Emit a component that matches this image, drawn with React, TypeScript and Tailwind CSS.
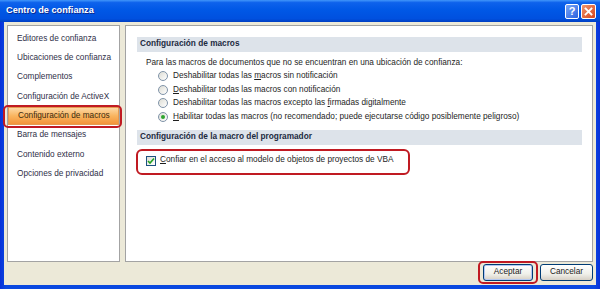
import React from "react";

const leftItems = [
  "Editores de confianza",
  "Ubicaciones de confianza",
  "Complementos",
  "Configuración de ActiveX",
  "Configuración de macros",
  "Barra de mensajes",
  "Contenido externo",
  "Opciones de privacidad",
];

function Radio({ checked }: { checked?: boolean }) {
  return (
    <span className="w-[10px] h-[10px] rounded-full border border-[#7f93a8] bg-[linear-gradient(135deg,#dcdcd4,#ffffff)] flex items-center justify-center shrink-0">
      {checked && <span className="w-[4px] h-[4px] rounded-full bg-[#2fa52f]" />}
    </span>
  );
}

export default function App() {
  return (
    <div className="w-[600px] h-[289px] flex flex-col overflow-hidden bg-[linear-gradient(to_right,#0831d9,#0a48e0_1%,#0a48e0_99%,#0831d9)] font-['Liberation_Sans',Arial,sans-serif]">
      {/* Title bar */}
      <div className="h-[22px] shrink-0 flex items-center pl-[6px] pr-[4px] bg-[linear-gradient(to_bottom,#4196fa_0%,#0e62ec_12%,#0058e6_45%,#0050df_85%,#003ec2_100%)]">
        <span className="text-white font-bold text-[9.2px] [text-shadow:1px_1px_0_#0b2a8f]">Centro de confianza</span>
        <div className="ml-auto flex gap-[2px] mt-[1px]">
          <div className="w-[14px] h-[15px] rounded-[2px] border border-white bg-[linear-gradient(135deg,#7aa6f6,#2a62e0)] flex items-center justify-center">
            <span className="text-white font-bold text-[11px] leading-none">?</span>
          </div>
          <div className="w-[15px] h-[15px] rounded-[2px] border border-white bg-[linear-gradient(135deg,#f0956e,#d6461c)] flex items-center justify-center">
            <svg width="9" height="9" viewBox="0 0 9 9">
              <path d="M1.5 1.5 L7.5 7.5 M7.5 1.5 L1.5 7.5" stroke="white" strokeWidth="1.8" strokeLinecap="square" />
            </svg>
          </div>
        </div>
      </div>

      {/* Body */}
      <div className="flex-1 mx-[4px] mb-[4px] bg-[#ece9d8] flex flex-col px-[3px] pt-[3px] text-[8.25px] text-[#1e1e1e]">
        <div className="flex gap-[5px] h-[237px] shrink-0">
          {/* Left panel */}
          <div className="w-[113px] shrink-0 bg-white border border-[#a3a3a3] pt-[3px]">
            {leftItems.map((t, i) =>
              i === 4 ? (
                <div key={t} className="relative h-[19.4px] flex items-center">
                  <div className="h-[18px] w-full flex items-center pl-[9px] bg-[linear-gradient(to_bottom,#fdd8a4,#f9b45e_50%,#f3943a)] border border-[#e59a50] text-[#3a2a10]">
                    {t}
                  </div>
                  <div className="absolute left-[-5px] top-[-2px] w-[119px] h-[23px] rounded-[5px] border-2 border-[#c01a22]" />
                </div>
              ) : (
                <div key={t} className="h-[19.4px] flex items-center pl-[9px] text-[#2f2f48]">
                  {t}
                </div>
              )
            )}
          </div>

          {/* Right panel */}
          <div className="flex-1 bg-white border border-[#a3a3a3] pt-[11px] pl-[11px] pr-[10px]">
            <div className="h-[15px] bg-[#dde3ea] flex items-center pl-[3px] font-bold text-[#1c2a40]">
              Configuración de macros
            </div>
            <div className="pl-[9px]">
              <div className="h-[12px] mt-[5.5px] flex items-center">
                Para las macros de documentos que no se encuentran en una ubicación de confianza:
              </div>
              <div className="pl-[12px]">
                <div className="h-[13.5px] flex items-center gap-[5px]">
                  <Radio />
                  <span>Deshabilitar todas las <u>m</u>acros sin notificación</span>
                </div>
                <div className="h-[13.5px] flex items-center gap-[5px]">
                  <Radio />
                  <span><u>D</u>eshabilitar todas las macros con notificación</span>
                </div>
                <div className="h-[13.5px] flex items-center gap-[5px]">
                  <Radio />
                  <span>Deshabilitar todas las macros excepto las <u>f</u>irmadas digitalmente</span>
                </div>
                <div className="h-[13.5px] flex items-center gap-[5px]">
                  <Radio checked />
                  <span><u>H</u>abilitar todas las macros (no recomendado; puede ejecutarse código posiblemente peligroso)</span>
                </div>
              </div>
            </div>

            <div className="h-[15px] mt-[6px] bg-[#dde3ea] flex items-center pl-[3px] font-bold text-[#1c2a40]">
              Configuración de la macro del programador
            </div>
            <div className="pl-[9px] mt-[9px]">
              <div className="relative h-[14px] flex items-center gap-[4px]">
                <span className="w-[10px] h-[10px] border border-[#1c5180] bg-[linear-gradient(135deg,#dcdcd4,#ffffff)] flex items-center justify-center shrink-0">
                  <svg width="8" height="8" viewBox="0 0 8 8">
                    <path d="M1 4 L3 6 L7 1.5" stroke="#21a121" strokeWidth="1.6" fill="none" />
                  </svg>
                </span>
                <span><u>C</u>onfiar en el acceso al modelo de objetos de proyectos de VBA</span>
                <div className="absolute left-[-10px] top-[-5px] w-[274px] h-[26px] rounded-[6px] border-2 border-[#c01a22]" />
              </div>
            </div>
          </div>
        </div>

        {/* Buttons */}
        <div className="flex justify-end gap-[7px] mt-[2px]">
          <div className="relative">
            <button className="w-[50px] h-[17px] rounded-[3px] border border-[#003c74] bg-[linear-gradient(to_bottom,#ffffff,#f0f0ea_60%,#d6d0c5)] shadow-[inset_0_0_0_1px_#b4c8f2] text-[8.25px] text-[#222] flex items-center justify-center">
              Aceptar
            </button>
            <div className="absolute left-[-5px] top-[-3px] w-[60px] h-[23px] rounded-[5px] border-2 border-[#c01a22]" />
          </div>
          <button className="w-[53px] h-[17px] rounded-[3px] border border-[#003c74] bg-[linear-gradient(to_bottom,#ffffff,#f0f0ea_60%,#d6d0c5)] text-[8.25px] text-[#222] flex items-center justify-center">
            Cancelar
          </button>
        </div>
      </div>
    </div>
  );
}
